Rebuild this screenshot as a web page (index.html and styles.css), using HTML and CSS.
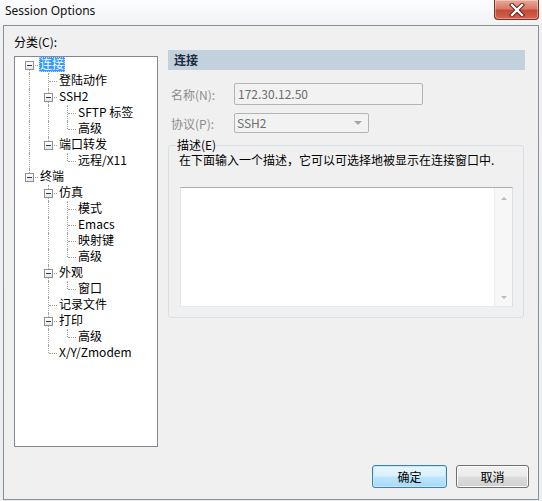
FILE: index.html
```html
<!DOCTYPE html>
<html lang="zh-CN">
<head>
<meta charset="utf-8">
<title>Session Options</title>
<link rel="stylesheet" href="styles.css">
</head>
<body>
<div class="window">
  <div class="titlebar">
    <span class="title">Session Options</span>
    <div class="close">
      <svg width="18" height="14" viewBox="0 0 18 14">
        <path d="M4 2 L14 12 M14 2 L4 12" stroke="#5a1a14" stroke-width="4.2" stroke-linecap="square"/>
        <path d="M4 2 L14 12 M14 2 L4 12" stroke="#ffffff" stroke-width="2.4" stroke-linecap="square"/>
      </svg>
    </div>
  </div>
  <div class="frame">
    <div class="main">
      <div class="left">
        <div class="cat-label">分类(C):</div>
        <div class="tree">
          <div class="row"><i class="c b x"><b class="box"></b></i><span class="lbl sel">连接</span></div>
          <div class="row"><i class="g v"></i><i class="c t b"></i><span class="lbl">登陆动作</span></div>
          <div class="row"><i class="g v"></i><i class="c t b x"><b class="box"></b></i><span class="lbl">SSH2</span></div>
          <div class="row"><i class="g v"></i><i class="g v"></i><i class="c t b"></i><span class="lbl">SFTP 标签</span></div>
          <div class="row"><i class="g v"></i><i class="g v"></i><i class="c t"></i><span class="lbl">高级</span></div>
          <div class="row"><i class="g v"></i><i class="c t x"><b class="box"></b></i><span class="lbl">端口转发</span></div>
          <div class="row"><i class="g v"></i><i class="g"></i><i class="c t"></i><span class="lbl">远程/X11</span></div>
          <div class="row"><i class="c t x"><b class="box"></b></i><span class="lbl">终端</span></div>
          <div class="row"><i class="g"></i><i class="c t b x"><b class="box"></b></i><span class="lbl">仿真</span></div>
          <div class="row"><i class="g"></i><i class="g v"></i><i class="c t b"></i><span class="lbl">模式</span></div>
          <div class="row"><i class="g"></i><i class="g v"></i><i class="c t b"></i><span class="lbl">Emacs</span></div>
          <div class="row"><i class="g"></i><i class="g v"></i><i class="c t b"></i><span class="lbl">映射键</span></div>
          <div class="row"><i class="g"></i><i class="g v"></i><i class="c t"></i><span class="lbl">高级</span></div>
          <div class="row"><i class="g"></i><i class="c t b x"><b class="box"></b></i><span class="lbl">外观</span></div>
          <div class="row"><i class="g"></i><i class="g v"></i><i class="c t"></i><span class="lbl">窗口</span></div>
          <div class="row"><i class="g"></i><i class="c t b"></i><span class="lbl">记录文件</span></div>
          <div class="row"><i class="g"></i><i class="c t b x"><b class="box"></b></i><span class="lbl">打印</span></div>
          <div class="row"><i class="g"></i><i class="g v"></i><i class="c t"></i><span class="lbl">高级</span></div>
          <div class="row"><i class="g"></i><i class="c t"></i><span class="lbl">X/Y/Zmodem</span></div>
        </div>
      </div>
      <div class="right">
        <div class="section-head">连接</div>
        <div class="field f1">
          <span class="flabel">名称(N):</span>
          <div class="input">172.30.12.50</div>
        </div>
        <div class="field f2">
          <span class="flabel">协议(P):</span>
          <div class="select"><span>SSH2</span><span class="arrow"></span></div>
        </div>
        <fieldset class="group">
          <legend>描述(E)</legend>
          <div class="desc">在下面输入一个描述，它可以可选择地被显示在连接窗口中.</div>
          <div class="textarea">
            <div class="sb"><span class="up"></span><span class="down"></span></div>
          </div>
        </fieldset>
      </div>
    </div>
    <div class="footer">
      <button class="btn ok">确定</button>
      <button class="btn cancel">取消</button>
    </div>
  </div>
</div>
</body>
</html>
```
FILE: styles.css
```css
* { box-sizing: border-box; }
html, body { margin: 0; padding: 0; }
body {
  width: 542px;
  height: 501px;
  overflow: hidden;
  font-family: "Noto Sans CJK SC", "Noto Sans", sans-serif;
  font-size: 12px;
  color: #000;
  background: #eceff2;
}
.window {
  width: 542px;
  height: 501px;
  display: flex;
  flex-direction: column;
  background: linear-gradient(#fdfdfe 0px, #eef0f3 30px, #eceff2 100%);
}
.titlebar {
  height: 25px;
  display: flex;
  align-items: flex-start;
  flex: none;
}
.title {
  font-family: "Noto Sans", "Open Sans", sans-serif;
  font-size: 12px;
  line-height: 16px;
  padding: 3px 0 0 5px;
  color: #111;
}
.close {
  margin-left: auto;
  margin-right: 3px;
  width: 45px;
  height: 20px;
  border: 1px solid #7a2f26;
  border-top: none;
  border-radius: 0 0 4px 4px;
  background: linear-gradient(#e9a999 0%, #d77c6a 45%, #c44a36 55%, #d3644e 100%);
  box-shadow: inset 0 0 0 1px rgba(255,255,255,0.35);
  display: flex;
  align-items: center;
  justify-content: center;
}
.frame {
  margin-left: 3px;
  width: 536px;
  height: 475px;
  border: 1px solid #8e8e8e;
  background: #f0f0f0;
  padding: 8px 9px 0 10px;
  display: flex;
  flex-direction: column;
}
.main {
  display: grid;
  grid-template-columns: 144px 357px;
  column-gap: 10px;
}
.cat-label { line-height: 16px; height: 16px; }
.tree {
  margin-top: 6px;
  height: 391px;
  border: 1px solid #828790;
  background: #fff;
  padding: 0 0 0 5px;
}
.row {
  display: flex;
  height: 16px;
  align-items: flex-start;
}
.g, .c {
  position: relative;
  display: block;
  width: 19px;
  height: 16px;
  flex: none;
}
.g.v::before {
  content: "";
  position: absolute;
  left: 9px;
  top: 0;
  bottom: 0;
  border-left: 1px dotted #a0a0a0;
}
.c::before {
  content: "";
  position: absolute;
  left: 9px;
  border-left: 1px dotted #a0a0a0;
}
.c.t::before { top: 0; height: 8px; }
.c.b::before { top: 8px; bottom: 0; }
.c.t.b::before { top: 0; bottom: 0; height: auto; }
.c::after {
  content: "";
  position: absolute;
  left: 10px;
  right: 1px;
  top: 8px;
  border-top: 1px dotted #a0a0a0;
}
.box {
  position: absolute;
  z-index: 1;
  left: 5px;
  top: 4px;
  width: 9px;
  height: 9px;
  border: 1px solid #919191;
  background: linear-gradient(#ffffff, #e6e6e6);
}
.box::after {
  content: "";
  position: absolute;
  left: 1px;
  top: 3px;
  width: 5px;
  height: 1px;
  background: #1e3d5c;
}
.lbl {
  padding: 0 1px;
  height: 15px;
  line-height: 14px;
  white-space: nowrap;
}
.lbl.sel {
  background: #3399ff;
  color: #fff;
  outline: 1px dotted #b8dcff;
  outline-offset: -1px;
}
.right { padding-top: 16px; }
.section-head {
  height: 20px;
  line-height: 20px;
  background: #c3d1df;
  padding-left: 6px;
  font-weight: bold;
  color: #1c2b3c;
}
.field {
  display: flex;
  align-items: center;
}
.f1 { margin-top: 13px; }
.f2 { margin-top: 8px; }
.flabel {
  width: 66px;
  padding-left: 3px;
  color: #8d8d8d;
  flex: none;
}
.input {
  width: 189px;
  height: 22px;
  line-height: 20px;
  border: 1px solid #b4b4b4;
  border-radius: 2px;
  background: #f2f2f2;
  color: #6d6d6d;
  padding-left: 3px;
}
.select {
  width: 135px;
  height: 20px;
  line-height: 18px;
  border: 1px solid #b4b4b4;
  border-radius: 2px;
  background: #f2f2f2;
  color: #6d6d6d;
  padding: 0 6px 0 2px;
  display: flex;
  align-items: center;
  justify-content: space-between;
}
.arrow {
  width: 0;
  height: 0;
  border-left: 4px solid transparent;
  border-right: 4px solid transparent;
  border-top: 4px solid #a6a6a6;
}
.group {
  margin: 6px 1px 0 0;
  padding: 0 10px 10px 8px;
  border: 1px solid #d5dfe5;
  border-radius: 3px;
  min-width: 0;
}
.group legend {
  padding: 0;
  line-height: 12px;
  height: 12px;
  font-size: 12px;
}
.desc {
  margin: 1px 0 0 2px;
  line-height: 16px;
  white-space: nowrap;
}
.textarea {
  margin: 19px 0 0 3px;
  width: 333px;
  height: 120px;
  border: 1px solid;
  border-color: #abadb3 #dbdfe6 #e3e9ef #e2e3ea;
  background: #fff;
  display: flex;
  justify-content: flex-end;
}
.sb {
  width: 18px;
  height: 100%;
  background: #f7f7f7;
  border-left: 1px solid #ececec;
  display: flex;
  flex-direction: column;
  justify-content: space-between;
  align-items: center;
  padding: 9px 0 7px;
}
.up, .down {
  width: 0;
  height: 0;
  border-left: 3px solid transparent;
  border-right: 3px solid transparent;
}
.up { border-bottom: 3px solid #b8b8b8; }
.down { border-top: 3px solid #b8b8b8; }
.footer {
  margin-top: 18px;
  display: flex;
  justify-content: flex-end;
  gap: 9px;
}
.btn {
  height: 23px;
  border-radius: 3px;
  font-family: "Noto Sans CJK SC", sans-serif;
  font-size: 12px;
  line-height: 20px;
  padding: 0;
  color: #000;
}
.ok {
  width: 75px;
  border: 1px solid #3c7fb1;
  background: linear-gradient(#eaf6fd 0%, #d9f0fc 48%, #bee6fd 52%, #a7d9f5 100%);
  box-shadow: inset 0 0 0 1px #c5e7fa;
}
.cancel {
  width: 73px;
  border: 1px solid #707070;
  background: linear-gradient(#f2f2f2 0%, #ebebeb 48%, #dddddd 52%, #cfcfcf 100%);
  box-shadow: inset 0 0 0 1px #fcfcfc;
}
```
